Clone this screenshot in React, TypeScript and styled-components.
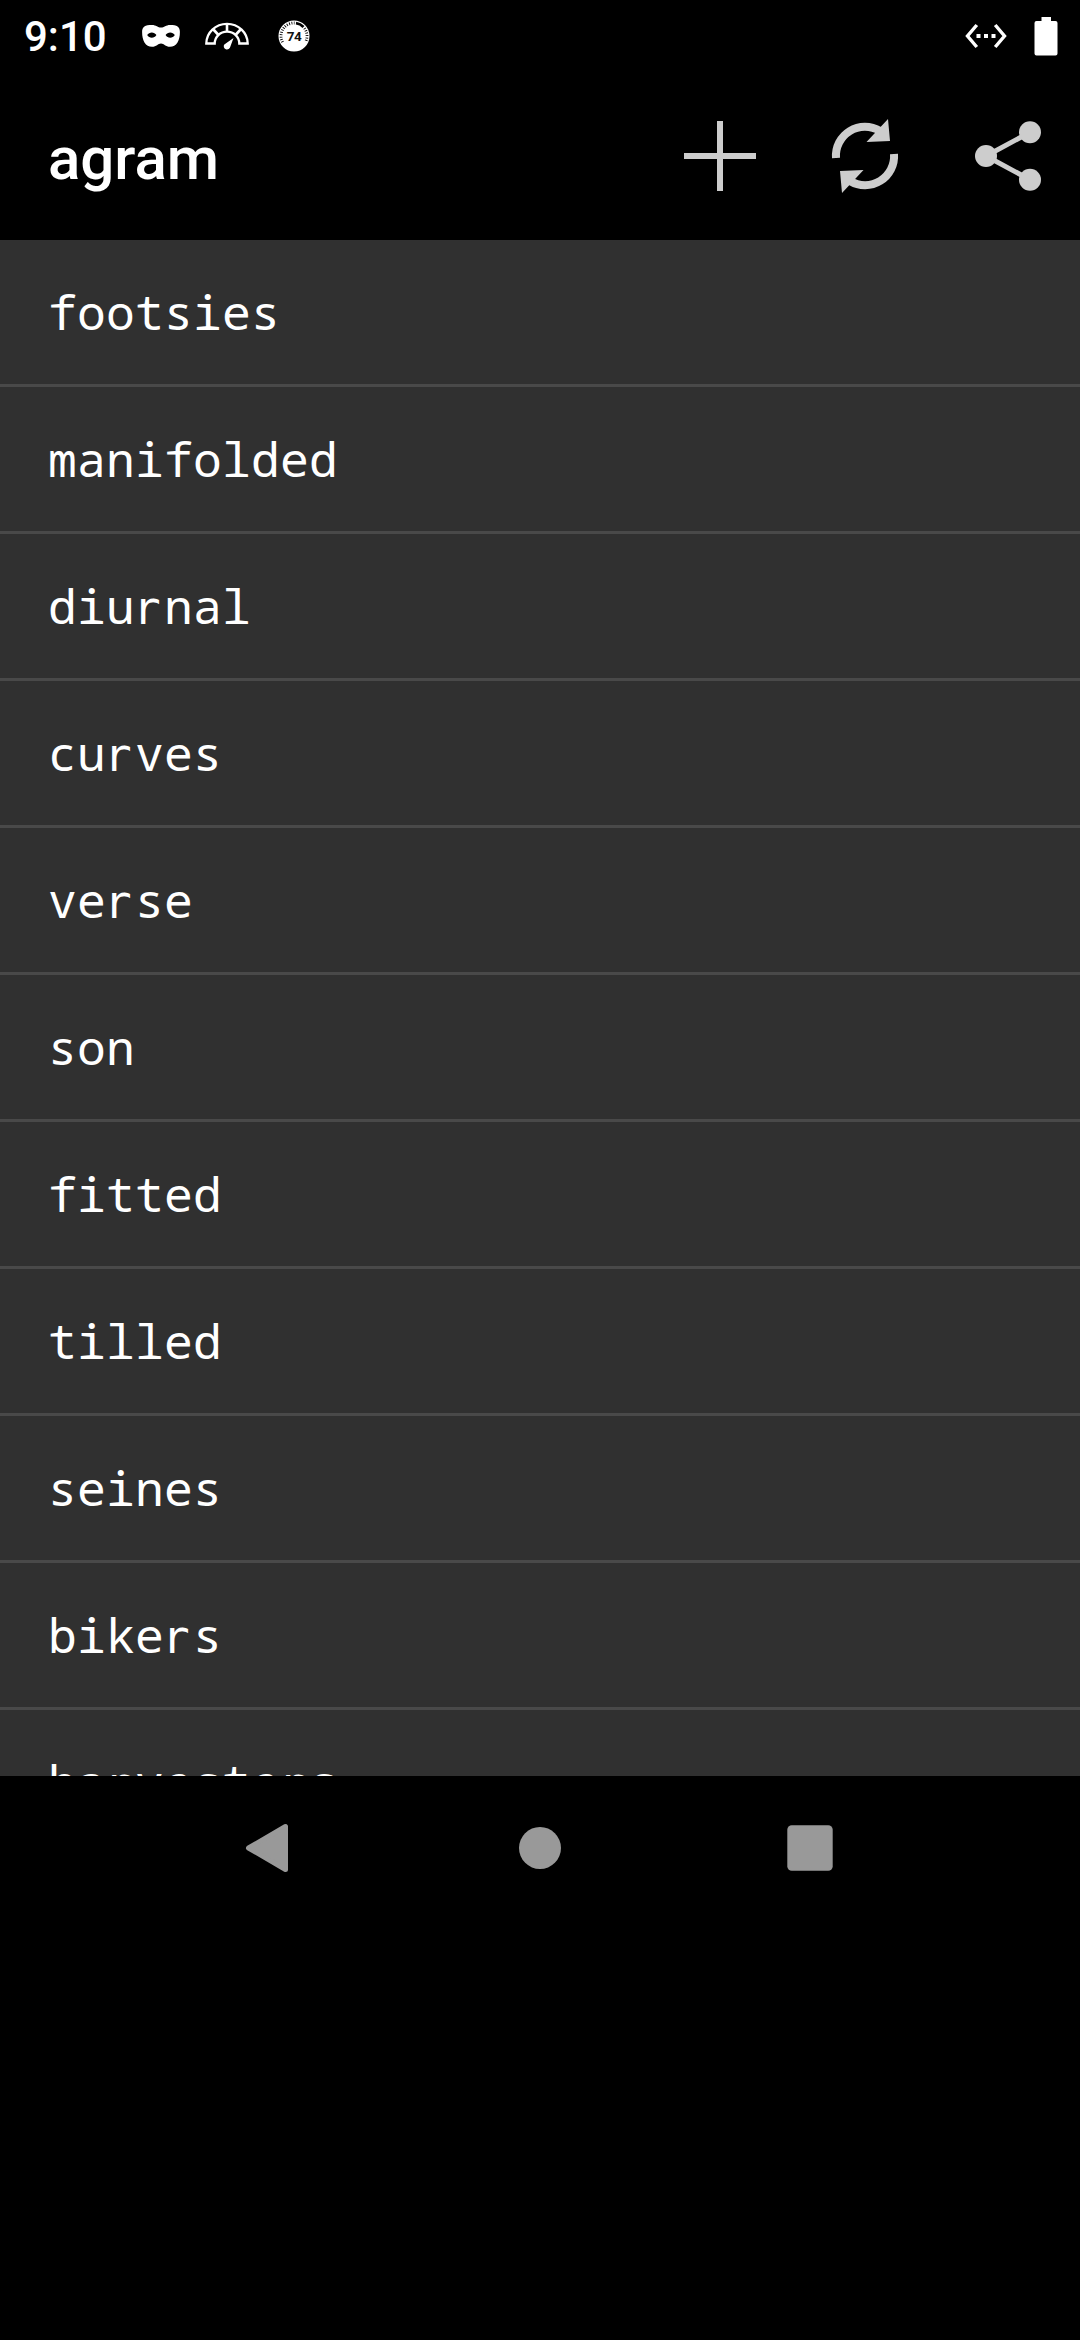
import React from "react";
import styled, { createGlobalStyle } from "styled-components";

const GlobalStyle = createGlobalStyle`
  html, body {
    margin: 0;
    padding: 0;
    background: #000;
  }
`;

const Screen = styled.div`
  width: 1080px;
  height: 2340px;
  background: #000;
  color: #fff;
  display: flex;
  flex-direction: column;
  overflow: hidden;
  font-family: Roboto, sans-serif;
`;

const StatusBar = styled.header`
  height: 72px;
  flex: none;
  display: flex;
  justify-content: space-between;
  align-items: center;
  padding: 0 22px 0 24px;
`;

const StatusGroup = styled.div`
  display: flex;
  align-items: center;
`;

const Clock = styled.span`
  width: 117px;
  font-size: 42px;
  line-height: 50px;
  font-weight: 500;
  padding-top: 2px;
`;

const Icon = styled.svg<{ $gap?: number }>`
  display: block;
  flex: none;
  margin-left: ${(p) => p.$gap ?? 0}px;
`;

const ActionBar = styled.div`
  height: 168px;
  flex: none;
  display: flex;
  align-items: center;
  justify-content: space-between;
  padding-left: 48px;
`;

const Title = styled.h1`
  margin: 0;
  padding-top: 5px;
  font-size: 60px;
  line-height: 70px;
  font-weight: 500;
`;

const Actions = styled.div`
  display: flex;
  height: 168px;
`;

const ActionButton = styled.button`
  width: 144px;
  height: 168px;
  border: 0;
  padding: 0;
  background: none;
  color: #cdcdcd;
`;

const WordList = styled.ul`
  margin: 0;
  padding: 0;
  list-style: none;
  height: 1536px;
  flex: none;
  overflow: hidden;
  background: #303030;
`;

const WordRow = styled.li`
  height: 144px;
  padding-left: 48px;
  border-bottom: 3px solid #494949;
  display: flex;
  align-items: center;
  font-family: "Noto Sans Mono", "DejaVu Sans Mono", monospace;
  font-size: 48px;
  line-height: 56px;
  letter-spacing: 0.2px;
`;

/* An "r" without slab serifs, set in one monospace cell. */
const PlainR = styled.span`
  display: inline-block;
  width: 29px;
  line-height: 1;
  text-indent: -2px;
  font-family: "DejaVu Sans Mono", monospace;
  font-size: 46px;
  letter-spacing: 0;
`;

const NavBar = styled.nav`
  height: 144px;
  flex: none;
  display: flex;
  justify-content: center;
`;

const NavButton = styled.button`
  width: 270px;
  height: 144px;
  border: 0;
  padding: 0;
  background: none;
  color: #999;
`;

const words = [
  "footsies",
  "manifolded",
  "diurnal",
  "curves",
  "verse",
  "son",
  "fitted",
  "tilled",
  "seines",
  "bikers",
  "harvesters",
];

const Word = ({ text }: { text: string }) => (
  <span>
    {text.split("r").map((part, i) => (
      <React.Fragment key={i}>
        {i > 0 && <PlainR>r</PlainR>}
        {part}
      </React.Fragment>
    ))}
  </span>
);

const MaskIcon = () => (
  <Icon width="40" height="24" viewBox="0 0 40 24">
    <path
      fillRule="evenodd"
      fill="#fff"
      d="M11 1C15 1 17 3.600 20 3.600S25 1 29 1C36 1 38.900 2.600 38.900 8C38.900 17 35.500 22.700 29 22.700C24.500 22.700 23 19.400 20 19.400S15.500 22.700 11 22.700C4.500 22.700 1.100 17 1.100 8C1.100 2.600 4 1 11 1ZM6.200 11C8.200 14.500 13.400 14.500 15.400 11C13.400 7.500 8.200 7.500 6.200 11ZM24.600 11C26.600 14.500 31.800 14.500 33.800 11C31.800 7.500 26.600 7.500 24.600 11Z"
    />
  </Icon>
);

const GaugeIcon = () => (
  <Icon $gap={23} width="46" height="30" viewBox="0 0 46 30">
    <g fill="none" stroke="#fff" strokeWidth="2.300">
      <path d="M2.300 22.500A20.700 19.700 0 0 1 43.700 22.500H35.300A12.300 11.800 0 0 0 10.700 22.500Z" />
      <path d="M23 2V11M9 8L14.500 14M37 8L31.500 14" strokeWidth="2.600" />
    </g>
    <path d="M29.500 17L26.300 25.800A3.300 3.300 0 1 1 20.300 23.400Z" fill="#fff" />
  </Icon>
);

const BadgeIcon = () => (
  <Icon $gap={28} width="32" height="32" viewBox="0 0 32 32">
    <circle cx="16" cy="16" r="15.500" fill="#fff" />
    <g fill="none" stroke="#000">
      <path d="M4.600 22.200A13 13 0 0 1 16.500 3" strokeWidth="2.800" strokeDasharray=".9 1.500" />
      <path d="M26.500 8.300A13 13 0 0 1 27.400 22.200" strokeWidth="2.800" strokeDasharray=".9 1.500" />
      <path d="M18 3.200A13 13 0 0 1 25.500 7" strokeWidth="2.800" />
    </g>
    <text
      x="15.900"
      y="21"
      textAnchor="middle"
      fontFamily="Roboto, sans-serif"
      fontWeight="700"
      fontSize="13.500"
      letterSpacing="-0.700"
      fill="#111"
    >
      74
    </text>
  </Icon>
);

const EthernetIcon = () => (
  <Icon width="42" height="26" viewBox="0 0 42 26">
    <path
      d="M11.800 2L2.500 13L11.800 24M30.200 2L39.500 13L30.200 24"
      fill="none"
      stroke="#fff"
      strokeWidth="3.400"
    />
    <path d="M11.500 11H15.500V15H11.500ZM19 11H23V15H19ZM26.500 11H30.500V15H26.500Z" fill="#fff" />
  </Icon>
);

const BatteryIcon = () => (
  <Icon $gap={27} width="24" height="40" viewBox="0 0 24 40">
    <path
      d="M7.500 1H17V5H21.500Q23.500 5 23.500 7V37.500Q23.500 39.500 21.500 39.500H2.500Q.5 39.500 .5 37.500V7Q.5 5 2.500 5H7.500Z"
      fill="#fff"
    />
  </Icon>
);

const App = () => (
  <>
    <GlobalStyle />
    <Screen>
      <StatusBar>
        <StatusGroup>
          <Clock>9:10</Clock>
          <MaskIcon />
          <GaugeIcon />
          <BadgeIcon />
        </StatusGroup>
        <StatusGroup>
          <EthernetIcon />
          <BatteryIcon />
        </StatusGroup>
      </StatusBar>
      <ActionBar>
        <Title>agram</Title>
        <Actions>
          <ActionButton aria-label="Add">
            <Icon width="144" height="168" viewBox="0 0 144 168">
              <path d="M69 49H75V81H108V87H75V119H69V87H36V81H69Z" fill="currentColor" />
            </Icon>
          </ActionButton>
          <ActionButton aria-label="Refresh">
            <Icon width="144" height="168" viewBox="792 72 144 168">
              <path d="M836 158A29 29 0 0 1 880 131" fill="none" stroke="currentColor" strokeWidth="8" />
              <path d="M894 154A29 29 0 0 1 850 181" fill="none" stroke="currentColor" strokeWidth="8" />
              <path d="M888 119L890 141L866.500 142ZM840 171L863.500 170L842 193Z" fill="currentColor" />
            </Icon>
          </ActionButton>
          <ActionButton aria-label="Share">
            <Icon width="144" height="168" viewBox="936 72 144 168">
              <path d="M1030 132.300L986 156L1030 179.700" fill="none" stroke="currentColor" strokeWidth="5" />
              <g fill="currentColor">
                <circle cx="986" cy="156" r="11" />
                <circle cx="1030" cy="132.300" r="11" />
                <circle cx="1030" cy="179.700" r="11" />
              </g>
            </Icon>
          </ActionButton>
        </Actions>
      </ActionBar>
      <WordList>
        {words.map((w) => (
          <WordRow key={w}>
            <Word text={w} />
          </WordRow>
        ))}
      </WordList>
      <NavBar>
        <NavButton aria-label="Back">
          <Icon width="270" height="144" viewBox="135 1776 270 144">
            <path
              d="M248.500 1848L285.500 1826.500V1869.500Z"
              fill="currentColor"
              stroke="currentColor"
              strokeWidth="5"
              strokeLinejoin="round"
            />
          </Icon>
        </NavButton>
        <NavButton aria-label="Home">
          <Icon width="270" height="144" viewBox="0 0 270 144">
            <circle cx="135" cy="72" r="21" fill="currentColor" />
          </Icon>
        </NavButton>
        <NavButton aria-label="Recents">
          <Icon width="270" height="144" viewBox="0 0 270 144">
            <rect x="112.300" y="49.300" width="45.400" height="45.400" rx="4.500" fill="currentColor" />
          </Icon>
        </NavButton>
      </NavBar>
    </Screen>
  </>
);

export default App;
